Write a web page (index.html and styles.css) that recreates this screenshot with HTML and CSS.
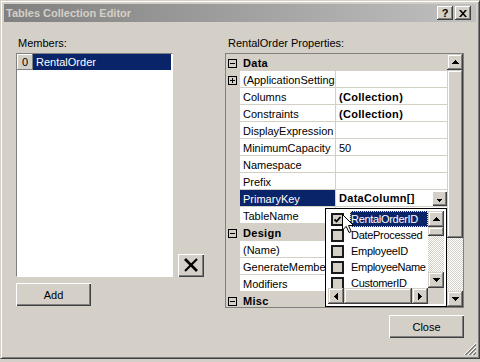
FILE: index.html
```html
<!DOCTYPE html>
<html lang="en">

<head>
    <meta charset="UTF-8">
    <title>Tables Collection Editor</title>
    <link rel="stylesheet" href="styles.css">
</head>

<body>
    <div class="window">
        <div class="titlebar">
            <span class="title">Tables Collection Editor</span>
            <div class="caption-buttons">
                <button class="cap-btn">?</button>
                <button class="cap-btn">
                    <svg width="8" height="7" viewBox="0 0 8 7"><path d="M0 0h2l2 2.2L6 0h2L5 3.5 8 7H6L4 4.8 2 7H0l3-3.5z"/></svg>
                </button>
            </div>
        </div>

        <div class="dialog">
            <div class="members">
                <div class="label">Members:</div>
                <div class="members-row">
                    <div class="listbox">
                        <div class="member">
                            <span class="index">0</span>
                            <span class="member-name">RentalOrder</span>
                        </div>
                    </div>
                    <button class="btn remove">
                        <svg width="16" height="16" viewBox="0 0 16 16">
                            <path d="M2 2 L14 14" stroke="#000" stroke-width="2.6"/>
                            <path d="M14 2 L2 14" stroke="#000" stroke-width="2.2"/>
                        </svg>
                    </button>
                </div>
                <button class="btn add">Add</button>
            </div>

            <div class="properties">
                <div class="label props-label">RentalOrder Properties:</div>
                <div class="grid">
                    <div class="rows">
                        <div class="category"><span class="gutter"><span class="toggle"></span></span><span class="cat-name">Data</span></div>
                        <div class="prop"><span class="gutter"><span class="toggle plus"></span></span><span class="name">(ApplicationSettings)</span><span class="value"></span></div>
                        <div class="prop"><span class="gutter"></span><span class="name">Columns</span><span class="value bold">(Collection)</span></div>
                        <div class="prop"><span class="gutter"></span><span class="name">Constraints</span><span class="value bold">(Collection)</span></div>
                        <div class="prop"><span class="gutter"></span><span class="name">DisplayExpression</span><span class="value"></span></div>
                        <div class="prop"><span class="gutter"></span><span class="name">MinimumCapacity</span><span class="value">50</span></div>
                        <div class="prop"><span class="gutter"></span><span class="name">Namespace</span><span class="value"></span></div>
                        <div class="prop"><span class="gutter"></span><span class="name">Prefix</span><span class="value"></span></div>
                        <div class="prop"><span class="gutter"></span><span class="name selected">PrimaryKey</span>
                            <span class="value bold picker">DataColumn[]
                                <span class="drop-btn"><svg width="5" height="3" viewBox="0 0 5 3"><path d="M0 0h5v1H4v1H3v1H2V2H1V1H0z"/></svg></span>
                            </span>
                        </div>
                        <div class="prop"><span class="gutter"></span><span class="name">TableName</span><span class="value"></span></div>
                        <div class="category"><span class="gutter"><span class="toggle"></span></span><span class="cat-name">Design</span></div>
                        <div class="prop"><span class="gutter"></span><span class="name">(Name)</span><span class="value"></span></div>
                        <div class="prop"><span class="gutter"></span><span class="name">GenerateMember</span><span class="value"></span></div>
                        <div class="prop"><span class="gutter"></span><span class="name">Modifiers</span><span class="value"></span></div>
                        <div class="category"><span class="gutter"><span class="toggle"></span></span><span class="cat-name">Misc</span></div>
                    </div>

                    <div class="vscroll">
                        <span class="sb-btn"><svg width="7" height="4" viewBox="0 0 7 4"><path d="M3 0h1v1h1v1h1v1h1v1H0V3h1V2h1V1h1z"/></svg></span>
                        <span class="sb-thumb main-thumb"></span>
                        <span class="sb-track"></span>
                        <span class="sb-btn"><svg width="7" height="4" viewBox="0 0 7 4"><path d="M0 0h7v1H6v1H5v1H4v1H3V3H2V2H1V1H0z"/></svg></span>
                    </div>

                    <!-- PrimaryKey editor dropped open over the grid -->
                    <div class="dropdown">
                        <div class="drop-top">
                            <div class="checklist">
                                <div class="item"><span class="check on"><svg width="9" height="9" viewBox="0 0 9 9"><path d="M1.5 4.5 L3.5 6.5 L7.5 2" fill="none" stroke="#000" stroke-width="1.8"/></svg></span><span class="item-text focus">RentalOrderID</span></div>
                                <div class="item"><span class="check"></span><span class="item-text">DateProcessed</span></div>
                                <div class="item"><span class="check"></span><span class="item-text">EmployeeID</span></div>
                                <div class="item"><span class="check"></span><span class="item-text">EmployeeName</span></div>
                                <div class="item"><span class="check"></span><span class="item-text">CustomerID</span></div>
                            </div>
                            <div class="vscroll small">
                                <span class="sb-btn"><svg width="7" height="4" viewBox="0 0 7 4"><path d="M3 0h1v1h1v1h1v1h1v1H0V3h1V2h1V1h1z"/></svg></span>
                                <span class="sb-thumb small-thumb"></span>
                                <span class="sb-track"></span>
                                <span class="sb-btn"><svg width="7" height="4" viewBox="0 0 7 4"><path d="M0 0h7v1H6v1H5v1H4v1H3V3H2V2H1V1H0z"/></svg></span>
                            </div>
                        </div>
                        <div class="hscroll">
                            <span class="sb-btn"><svg width="4" height="7" viewBox="0 0 4 7"><path d="M4 0v7H3V6H2V5H1V4H0V3h1V2h1V1h1V0z"/></svg></span>
                            <span class="sb-thumb wide-thumb"></span>
                            <span class="sb-btn"><svg width="4" height="7" viewBox="0 0 4 7"><path d="M0 0h1v1h1v1h1v1h1v1H3v1H2v1H1v1H0z"/></svg></span>
                            <span class="corner"></span>
                        </div>
                        <svg class="cursor" width="12" height="19" viewBox="0 0 12 19">
                            <path d="M0.5 0.5 V16 L4.2 12.4 L7 18.5 L9.2 17.5 L6.5 11.5 H11.5 Z" fill="#fff" stroke="#000" stroke-width="1"/>
                        </svg>
                    </div>
                </div>
                <button class="btn close">Close</button>
            </div>
        </div>

        <svg class="grip" width="12" height="12" viewBox="0 0 12 12">
            <path d="M12 0 L0 12 M12 4 L4 12 M12 8 L8 12" stroke="#fff"/>
            <path d="M12 1 L1 12 M12 2 L2 12 M12 5 L5 12 M12 6 L6 12 M12 9 L9 12 M12 10 L10 12" stroke="#808080"/>
        </svg>
    </div>
</body>

</html>
```

FILE: styles.css
```css
body {
    margin: 0;
    background-color: #d4d0c8;
    font-family: "Liberation Sans", Arial, sans-serif;
    font-size: 11px;
    color: #000;
}

.window {
    position: relative;
    width: 480px;
    height: 359px;
    box-sizing: border-box;
    padding: 3px;
    background-color: #d4d0c8;
    border: 1px solid;
    border-color: #d4d0c8 #404040 #404040 #d4d0c8;
    box-shadow: inset 1px 1px #fff, inset -1px -1px #808080;
}

.titlebar {
    height: 18px;
    display: flex;
    align-items: center;
    justify-content: space-between;
    padding-left: 2px;
    background: linear-gradient(to right, #808080, #c0c0c0);
}

.title {
    color: #d4d0c8;
    font-weight: bold;
    line-height: 18px;
}

.caption-buttons {
    display: flex;
    gap: 2px;
    margin-right: 5px;
}

.cap-btn {
    width: 16px;
    height: 14px;
    padding: 0;
    border: none;
    display: flex;
    align-items: center;
    justify-content: center;
    background-color: #d4d0c8;
    font-family: inherit;
    font-size: 11px;
    font-weight: bold;
    line-height: 14px;
    box-shadow: inset -1px -1px #404040, inset 1px 1px #fff, inset -2px -2px #808080;
}

.dialog {
    display: flex;
    gap: 21px;
    padding: 15px 12px 0 12px;
}

.label {
    line-height: 13px;
    margin: 0 0 3px 2px;
}

.props-label {
    margin-left: 3px;
}

.members {
    width: 188px;
    display: flex;
    flex-direction: column;
}

.members-row {
    display: flex;
    align-items: flex-end;
    gap: 5px;
}

.listbox {
    width: 157px;
    height: 224px;
    box-sizing: border-box;
    background-color: #fff;
    border: 1px solid;
    border-color: #808080 #fff #fff #808080;
}

.member {
    display: flex;
    height: 16px;
    margin-right: 1px;
}

.index {
    width: 16px;
    line-height: 16px;
    text-align: center;
    background-color: #d4d0c8;
    box-shadow: inset -1px -1px #808080, inset 1px 1px #fff;
}

.member-name {
    flex: 1;
    padding-left: 3px;
    line-height: 16px;
    color: #fff;
    background-color: #0a246a;
}

.btn {
    padding: 1px 0 0 0;
    border: none;
    background-color: #d4d0c8;
    font-family: inherit;
    font-size: 11px;
    color: #000;
    display: flex;
    align-items: center;
    justify-content: center;
    box-shadow: inset 1px 1px #fff, inset -1px -1px #404040, inset -2px -2px #808080;
}

.remove {
    width: 26px;
    height: 23px;
    padding: 0 1px 1px 0;
}

.add {
    width: 75px;
    height: 23px;
    margin-top: 6px;
}

.properties {
    width: 239px;
    display: flex;
    flex-direction: column;
}

.grid {
    position: relative;
    width: 239px;
    height: 255px;
    box-sizing: border-box;
    border: 1px solid #808080;
    display: flex;
    background-color: #fff;
}

.rows {
    width: 221px;
    overflow: hidden;
}

.prop,
.category {
    display: flex;
    height: 17px;
}

.category {
    background-color: #d4d0c8;
}

.gutter {
    width: 14px;
    flex: none;
    box-sizing: border-box;
    padding: 5px 0 0 2px;
    background-color: #d4d0c8;
}

.toggle {
    display: block;
    width: 9px;
    height: 9px;
    box-sizing: border-box;
    border: 1px solid #000;
    background: linear-gradient(#000, #000) center / 5px 1px no-repeat;
}

.toggle.plus {
    background:
        linear-gradient(#000, #000) center / 5px 1px no-repeat,
        linear-gradient(#000, #000) center / 1px 5px no-repeat;
}

.cat-name {
    padding: 1px 0 0 3px;
    line-height: 16px;
    font-weight: bold;
    letter-spacing: 0.3px;
}

.name,
.value {
    box-sizing: border-box;
    height: 17px;
    padding: 1px 0 0 3px;
    line-height: 16px;
    white-space: nowrap;
    overflow: hidden;
    border-bottom: 1px solid #d4d0c8;
}

.name {
    width: 96px;
    flex: none;
    border-right: 1px solid #d4d0c8;
}

.name.selected {
    color: #fff;
    background-color: #0a246a;
}

.value {
    flex: 1;
}

.bold {
    font-weight: bold;
    letter-spacing: 0.3px;
}

.picker {
    display: flex;
    justify-content: space-between;
    padding-top: 0;
    line-height: 17px;
}

.drop-btn {
    width: 15px;
    height: 15px;
    margin-top: 1px;
    display: flex;
    align-items: center;
    justify-content: center;
    padding-top: 3px;
    box-sizing: border-box;
    background-color: #d4d0c8;
    box-shadow: inset 1px 1px #fff, inset -1px -1px #404040, inset -2px -2px #808080;
}

.vscroll {
    width: 16px;
    display: flex;
    flex-direction: column;
}

.hscroll {
    height: 16px;
    display: flex;
}

.sb-btn {
    width: 16px;
    height: 16px;
    flex: none;
    display: flex;
    align-items: center;
    justify-content: center;
    background-color: #d4d0c8;
    box-shadow: inset -1px -1px #404040, inset 1px 1px #d4d0c8, inset -2px -2px #808080, inset 2px 2px #fff;
}

.sb-thumb {
    flex: none;
    background-color: #d4d0c8;
    box-shadow: inset -1px -1px #404040, inset 1px 1px #d4d0c8, inset -2px -2px #808080, inset 2px 2px #fff;
}

.main-thumb {
    height: 168px;
}

.small-thumb {
    height: 9px;
}

.wide-thumb {
    flex: 1;
}

.sb-track {
    flex: 1;
    background-color: #fff;
    background-image: conic-gradient(#d4d0c8 25%, #fff 0 50%, #d4d0c8 0 75%, #fff 0);
    background-size: 2px 2px;
}

.dropdown {
    position: absolute;
    left: 99px;
    top: 154px;
    width: 122px;
    height: 99px;
    box-sizing: border-box;
    padding: 2px;
    border: 1px solid #000;
    background-color: #fff;
}

.drop-top {
    display: flex;
    height: 77px;
}

.checklist {
    width: 100px;
    overflow: hidden;
}

.item {
    display: flex;
    height: 16px;
}

.check {
    width: 13px;
    height: 13px;
    flex: none;
    box-sizing: border-box;
    margin: 2px 0 0 3px;
    border: 2px solid #1a1a1a;
    background-color: #d4d0c8;
    display: flex;
    align-items: center;
    justify-content: center;
}

.item-text {
    flex: 1;
    margin-left: 6px;
    height: 16px;
    box-sizing: border-box;
    border: 1px solid transparent;
    line-height: 14px;
    letter-spacing: -0.3px;
    white-space: nowrap;
    overflow: hidden;
}

.item-text.focus {
    color: #fff;
    background-color: #0a246a;
    border: 1px dotted #e8e4a8;
}

.corner {
    width: 16px;
    background-color: #d4d0c8;
}

.cursor {
    position: absolute;
    left: 16px;
    top: 5px;
}

.close {
    width: 75px;
    height: 23px;
    margin-top: 7px;
    align-self: flex-end;
}

.grip {
    position: absolute;
    right: 3px;
    bottom: 3px;
}
```
